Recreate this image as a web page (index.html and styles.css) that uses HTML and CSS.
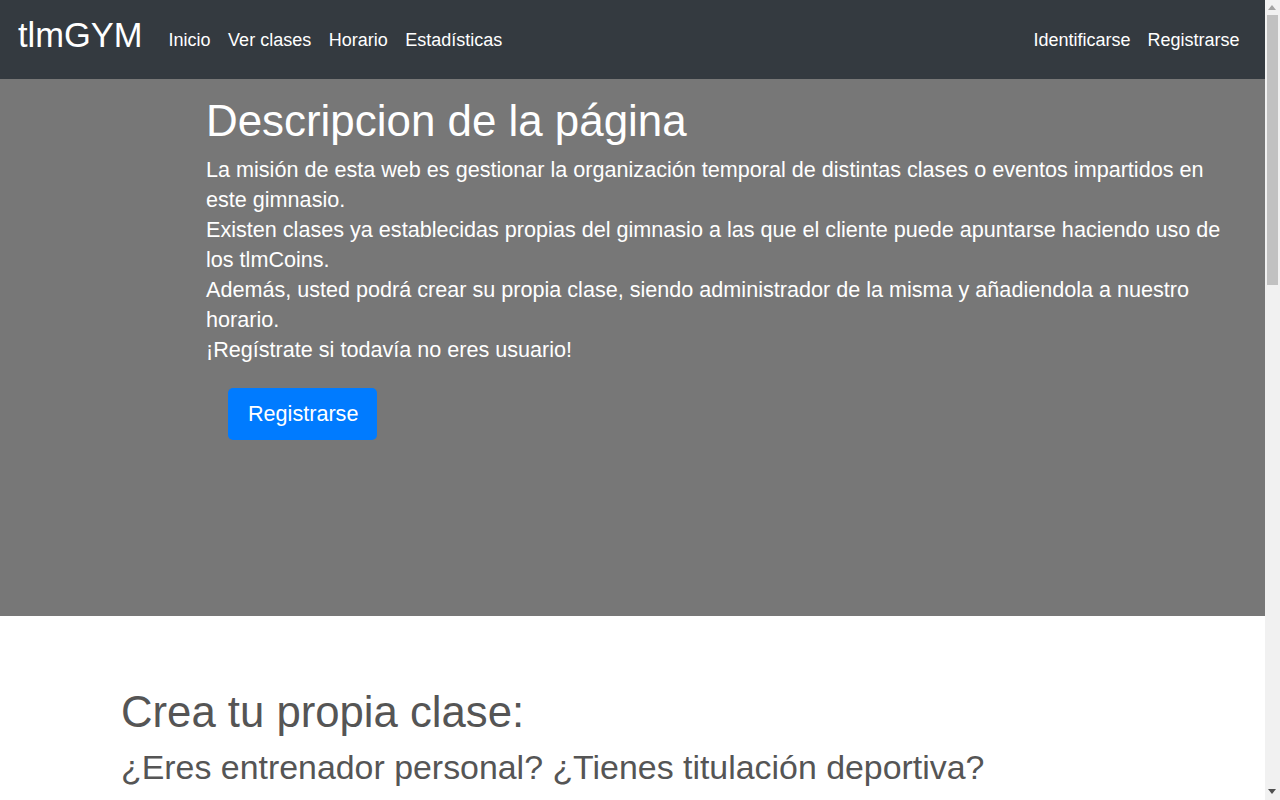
FILE: index.html
```html
<!DOCTYPE html>
<html lang="es">
<head>
<meta charset="utf-8">
<title>tlmGYM</title>
<link rel="stylesheet" href="styles.css">
</head>
<body>
<div class="page">
  <nav class="navbar">
    <a class="brand" href="#">tlmGYM</a>
    <ul class="nav-links">
      <li><a href="#">Inicio</a></li>
      <li><a href="#">Ver clases</a></li>
      <li><a href="#">Horario</a></li>
      <li><a href="#">Estadísticas</a></li>
    </ul>
    <ul class="nav-links nav-right">
      <li><a href="#">Identificarse</a></li>
      <li><a href="#">Registrarse</a></li>
    </ul>
  </nav>
  <header class="hero">
    <div class="hero-inner">
      <h1 class="hero-title">Descripcion de la página</h1>
      <p class="hero-text">La misión de esta web es gestionar la organización temporal de distintas clases o eventos impartidos en este gimnasio.<br>Existen clases ya establecidas propias del gimnasio a las que el cliente puede apuntarse haciendo uso de los tlmCoins.<br>Además, usted podrá crear su propia clase, siendo administrador de la misma y añadiendola a nuestro horario.<br>¡Regístrate si todavía no eres usuario!</p>
      <div class="hero-actions">
        <a class="btn-primary" href="#">Registrarse</a>
      </div>
    </div>
  </header>
  <section class="create">
    <h2 class="create-title">Crea tu propia clase:</h2>
    <h3 class="create-sub">¿Eres entrenador personal? ¿Tienes titulación deportiva?</h3>
    <p class="create-text">Regístrate y crea tus propias clases para que los clientes del gimnasio puedan apuntarse a ellas.</p>
  </section>
  <section class="more">
    <h2 class="create-title">Horario semanal</h2>
    <p class="create-text">Consulta el horario de todas las clases disponibles.</p>
  </section>
</div>
<div class="scrollbar" aria-hidden="true">
  <span class="sb-arrow sb-up"></span>
  <span class="sb-thumb"></span>
  <span class="sb-arrow sb-down"></span>
</div>
</body>
</html>
```

FILE: styles.css
```css
* { box-sizing: border-box; }
html, body { margin: 0; padding: 0; }
body {
  font-family: "Liberation Sans", Arial, sans-serif;
  color: #212529;
  background: #fff;
}
.page {
  margin-right: 15px;
}
.navbar {
  display: flex;
  align-items: center;
  height: 79px;
  background: #343a40;
  padding: 2px 17px 0 18px;
}
.brand {
  color: #fff;
  text-decoration: none;
  font-size: 34.5px;
  line-height: 1;
  margin-right: 17px;
  margin-top: -10px;
}
.nav-links {
  display: flex;
  list-style: none;
  margin: 0;
  padding: 0;
}
.nav-links a {
  display: block;
  color: #fff;
  text-decoration: none;
  font-size: 18px;
  padding: 0 8.5px;
}
.nav-links:first-of-type a:first-child { padding-left: 9px; }
.nav-right { margin-left: auto; }
.hero {
  background: #777;
  color: #fff;
  height: 537px;
  padding: 16px 34px 0 206px;
}
.hero-title {
  font-size: 43.9px;
  font-weight: 400;
  line-height: 1.2;
  margin: 0 0 7px;
}
.hero-text {
  font-size: 21.6px;
  line-height: 30px;
  margin: 0;
}
.hero-actions {
  padding: 23px 0 0 22px;
}
.btn-primary {
  display: inline-block;
  background: #007bff;
  color: #fff;
  text-decoration: none;
  font-size: 21.6px;
  line-height: 32px;
  padding: 10px 19px 10px 20px;
  border-radius: 5px;
}
.create {
  padding: 70px 0 0 121px;
  color: #555;
}
.create-title {
  font-size: 43.7px;
  font-weight: 400;
  line-height: 1.2;
  margin: 0 0 9px;
}
.create-sub {
  font-size: 33.9px;
  font-weight: 400;
  line-height: 1.2;
  margin: 0 0 30px;
}
.create-text {
  font-size: 20px;
  margin: 0;
}
.more {
  padding: 80px 0 1200px 121px;
  color: #555;
}
.scrollbar {
  position: fixed;
  top: 0;
  right: 0;
  width: 15px;
  height: 100vh;
  background: #f1f1f1;
}
.sb-thumb {
  position: absolute;
  left: 2px;
  right: 2px;
  top: 15px;
  height: 270px;
  background: #c1c1c1;
}
.sb-arrow {
  position: absolute;
  left: 3px;
  width: 0;
  height: 0;
  border-left: 4.5px solid transparent;
  border-right: 4.5px solid transparent;
}
.sb-up {
  top: 5px;
  border-bottom: 5px solid #a3a3a3;
}
.sb-down {
  bottom: 6px;
  border-top: 5px solid #505050;
}
```
